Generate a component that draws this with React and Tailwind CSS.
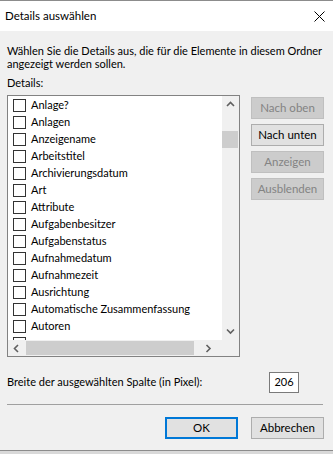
import React from 'react'

const items = [
  'Anlage?',
  'Anlagen',
  'Anzeigename',
  'Arbeitstitel',
  'Archivierungsdatum',
  'Art',
  'Attribute',
  'Aufgabenbesitzer',
  'Aufgabenstatus',
  'Aufnahmedatum',
  'Aufnahmezeit',
  'Ausrichtung',
  'Automatische Zusammenfassung',
  'Autoren',
  '',
]

const font = { fontFamily: 'Lato, "Liberation Sans", Arial, sans-serif' }

function Chevron({ dir }) {
  const paths = {
    up: 'M1 5 L4.5 1.5 L8 5',
    down: 'M1 1.5 L4.5 5 L8 1.5',
    left: 'M5 1 L1.5 4.5 L5 8',
    right: 'M1.5 1 L5 4.5 L1.5 8',
  }
  const vertical = dir === 'up' || dir === 'down'
  return (
    <svg width={vertical ? 9 : 7} height={vertical ? 7 : 9} viewBox={vertical ? '0 0 9 7' : '0 0 7 9'}>
      <path d={paths[dir]} fill="none" stroke="#606060" strokeWidth="1.6" />
    </svg>
  )
}

function Button({ children, disabled, primary }) {
  return (
    <div
      className={`w-[73px] h-[22px] flex items-center justify-center text-[11.5px] leading-none
        ${disabled ? 'bg-[#cccccc] border border-[#bfbfbf] text-[#838383]' : 'bg-[#e1e1e1] text-black'}
        ${primary ? 'border-2 border-[#0078d7]' : ''}
        ${!disabled && !primary ? 'border border-[#adadad]' : ''}`}
    >
      {children}
    </div>
  )
}

export default function App() {
  return (
    <div className="w-[333px] h-[454px] flex flex-col bg-[#f0f0f0] text-black overflow-hidden" style={font}>
      {/* window frame top */}
      <div className="h-px bg-[#8c8c8c]" />

      {/* title bar */}
      <div className="h-[30px] bg-white flex items-center justify-between pl-[5px] pr-[8px]">
        <span className="text-[11.5px]">Details auswählen</span>
        <svg width="11" height="11" viewBox="0 0 11 11">
          <path d="M0.5 0.5 L10.5 10.5 M10.5 0.5 L0.5 10.5" stroke="#000" strokeWidth="1" />
        </svg>
      </div>

      {/* body */}
      <div className="flex-1 flex flex-col pl-[7px]">
        <p className="mt-[13px] text-[11px] leading-[13px] whitespace-nowrap">
          Wählen Sie die Details aus, die für die Elemente in diesem Ordner
          <br />
          angezeigt werden sollen.
        </p>
        <p className="mt-[6px] text-[11px] leading-[13px]">Details:</p>

        <div className="mt-[6px] flex">
          {/* list box */}
          <div className="w-[233px] h-[262px] border border-[#828282] bg-white flex flex-col">
            <div className="flex h-[244px]">
              <div className="w-[214px] overflow-hidden pt-px">
                {items.map((item, i) => (
                  <div key={i} className="h-[17px] flex items-center pl-[5px]">
                    <div className="w-[13px] h-[13px] border border-[#333333] bg-white shrink-0" />
                    {item && <span className="ml-[5px] text-[11px] whitespace-nowrap">{item}</span>}
                  </div>
                ))}
              </div>
              {/* vertical scrollbar */}
              <div className="w-[17px] bg-[#f0f0f0] flex flex-col items-center">
                <div className="h-[17px] flex items-center justify-center">
                  <Chevron dir="up" />
                </div>
                <div className="mt-[18px] w-[16px] h-[17px] bg-[#cdcdcd] self-start" />
                <div className="flex-1" />
                <div className="h-[17px] flex items-center justify-center">
                  <Chevron dir="down" />
                </div>
              </div>
            </div>
            {/* horizontal scrollbar */}
            <div className="flex-1 flex bg-[#f0f0f0]">
              <div className="w-[214px] flex items-center">
                <div className="w-[17px] flex justify-center">
                  <Chevron dir="left" />
                </div>
                <div className="ml-px w-[168px] h-[14px] bg-[#cdcdcd]" />
                <div className="flex-1 flex justify-center">
                  <Chevron dir="right" />
                </div>
              </div>
            </div>
          </div>

          {/* side buttons */}
          <div className="ml-[11px] mt-[2px] flex flex-col gap-[5px]">
            <Button disabled>Nach oben</Button>
            <Button>Nach unten</Button>
            <Button disabled>Anzeigen</Button>
            <Button disabled>Ausblenden</Button>
          </div>
        </div>

        <div className="mt-[15px] w-[292px] flex items-center justify-between">
          <span className="text-[11px]">Breite der ausgewählten Spalte (in Pixel):</span>
          <div className="w-[30px] h-[21px] border border-[#7a7a7a] bg-white flex items-center justify-center text-[11px]">
            206
          </div>
        </div>

        <div className="mt-[11px] w-[316px] h-px bg-[#a0a0a0]" />

        <div className="mt-[12px] pr-[9px] flex justify-end gap-[13px]">
          <Button primary>OK</Button>
          <Button>Abbrechen</Button>
        </div>
      </div>

      {/* window frame bottom */}
      <div className="h-px bg-[#8c8c8c]" />
      <div className="h-[3px] bg-[#d9d9d9]" />
    </div>
  )
}
